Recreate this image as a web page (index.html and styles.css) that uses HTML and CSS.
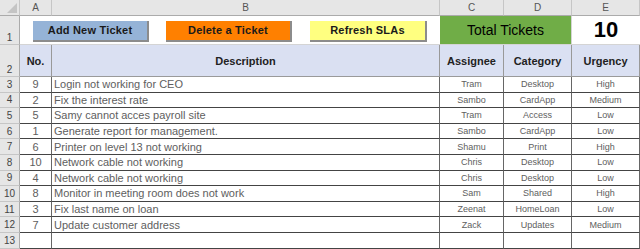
FILE: index.html
```html
<!DOCTYPE html>
<html lang="en">

<head>
    <meta charset="UTF-8">
    <title>Ticket Tracker</title>
    <link rel="stylesheet" href="styles.css">
</head>

<body>
    <div class="sheet">
        <!-- column headers -->
        <div class="corner"><span class="tri"></span></div>
        <div class="colhead">A</div>
        <div class="colhead">B</div>
        <div class="colhead">C</div>
        <div class="colhead">D</div>
        <div class="colhead">E</div>

        <!-- row 1 -->
        <div class="rowhead tall">1</div>
        <div class="buttons">
            <button class="btn btn-add">Add New Ticket</button>
            <button class="btn btn-delete">Delete a Ticket</button>
            <button class="btn btn-refresh">Refresh SLAs</button>
        </div>
        <div class="total-label">Total Tickets</div>
        <div class="total-value">10</div>

        <!-- row 2 -->
        <div class="rowhead tall">2</div>
        <div class="th">No.</div>
        <div class="th">Description</div>
        <div class="th">Assignee</div>
        <div class="th">Category</div>
        <div class="th">Urgency</div>
    </div>

    <script>
        const tickets = [
            [9, 'Login not working for CEO', 'Tram', 'Desktop', 'High'],
            [2, 'Fix the interest rate', 'Sambo', 'CardApp', 'Medium'],
            [5, 'Samy cannot acces payroll site', 'Tram', 'Access', 'Low'],
            [1, 'Generate report for management.', 'Sambo', 'CardApp', 'Low'],
            [6, 'Printer on level 13 not working', 'Shamu', 'Print', 'High'],
            [10, 'Network cable not working', 'Chris', 'Desktop', 'Low'],
            [4, 'Network cable not working', 'Chris', 'Desktop', 'Low'],
            [8, 'Monitor in meeting room does not work', 'Sam', 'Shared', 'High'],
            [3, 'Fix last name on loan', 'Zeenat', 'HomeLoan', 'Low'],
            [7, 'Update customer address', 'Zack', 'Updates', 'Medium'],
            ['', '', '', '', '']
        ];

        const sheet = document.querySelector('.sheet');
        tickets.forEach((t, i) => {
            const cells = [
                ['rowhead', i + 3],
                ['td num', t[0]],
                ['td desc', t[1]],
                ['td small', t[2]],
                ['td small', t[3]],
                ['td small', t[4]]
            ];
            cells.forEach(([cls, text]) => {
                const el = document.createElement('div');
                el.className = cls;
                el.textContent = text;
                sheet.appendChild(el);
            });
        });
    </script>
</body>

</html>
```

FILE: styles.css
```css
* {
    box-sizing: border-box;
}

body {
    margin: 0;
    background: #fff;
    font-family: "Liberation Sans", Arial, sans-serif;
}

.sheet {
    display: grid;
    grid-template-columns: 20px 32px 388px 64px 68px 68px;
    grid-template-rows: 16px 29px 32px repeat(11, 15.6px);
    width: 640px;
    overflow: hidden;
}

.corner,
.colhead {
    background: #e6e6e6;
    border-right: 1px solid #c6c6c6;
    border-bottom: 1px solid #ababab;
}

.corner {
    position: relative;
}

.corner .tri {
    position: absolute;
    right: 2px;
    bottom: 2px;
    width: 0;
    height: 0;
    border-left: 10px solid transparent;
    border-bottom: 10px solid #c4c4c4;
}

.colhead {
    font-size: 10px;
    color: #555;
    display: flex;
    align-items: center;
    justify-content: center;
}

.rowhead {
    background: #e6e6e6;
    border-right: 1px solid #ababab;
    border-bottom: 1px solid #c6c6c6;
    font-size: 10px;
    color: #444;
    display: flex;
    align-items: center;
    justify-content: center;
}

.rowhead.tall {
    align-items: flex-end;
    padding-bottom: 1px;
}

.buttons {
    grid-column: 2 / 4;
    display: flex;
    align-items: center;
    padding-left: 13px;
    gap: 17px;
    border-bottom: 1px solid #d4d4d4;
}

.btn {
    height: 21px;
    border: none;
    border-right: 2px solid #8c8c8c;
    border-bottom: 2px solid #8c8c8c;
    font-family: inherit;
    font-size: 11px;
    font-weight: bold;
    letter-spacing: 0.2px;
    color: #1a1a1a;
    padding: 0;
    margin-top: 2px;
}

.btn-add {
    width: 116px;
    background: #95b3d7;
}

.btn-delete {
    width: 126px;
    background: #ff8000;
}

.btn-refresh {
    width: 117px;
    margin-left: 1px;
    background: #ffff80;
}

.total-label {
    grid-column: 4 / 6;
    background: #70ad47;
    border-bottom: 1px solid #d4d4d4;
    border-right: 1px solid #d4d4d4;
    font-size: 14px;
    display: flex;
    align-items: center;
    justify-content: center;
    color: #000;
}

.total-value {
    border-bottom: 1px solid #d4d4d4;
    font-size: 22px;
    font-weight: bold;
    display: flex;
    align-items: center;
    justify-content: center;
    color: #000;
}

.th {
    background: #dae0f2;
    border-right: 1px solid #999;
    border-bottom: 1px solid #9a9a9a;
    font-size: 11px;
    font-weight: bold;
    color: #222;
    display: flex;
    align-items: center;
    justify-content: center;
}

.td {
    border-right: 1px solid #666;
    border-bottom: 1px solid #444;
    color: #5e5e5e;
    display: flex;
    align-items: center;
    white-space: nowrap;
}

.td.num {
    justify-content: center;
    font-size: 11px;
}

.td.desc {
    font-size: 11px;
    padding-left: 2px;
}

.td.small {
    justify-content: center;
    font-size: 9px;
}
```
